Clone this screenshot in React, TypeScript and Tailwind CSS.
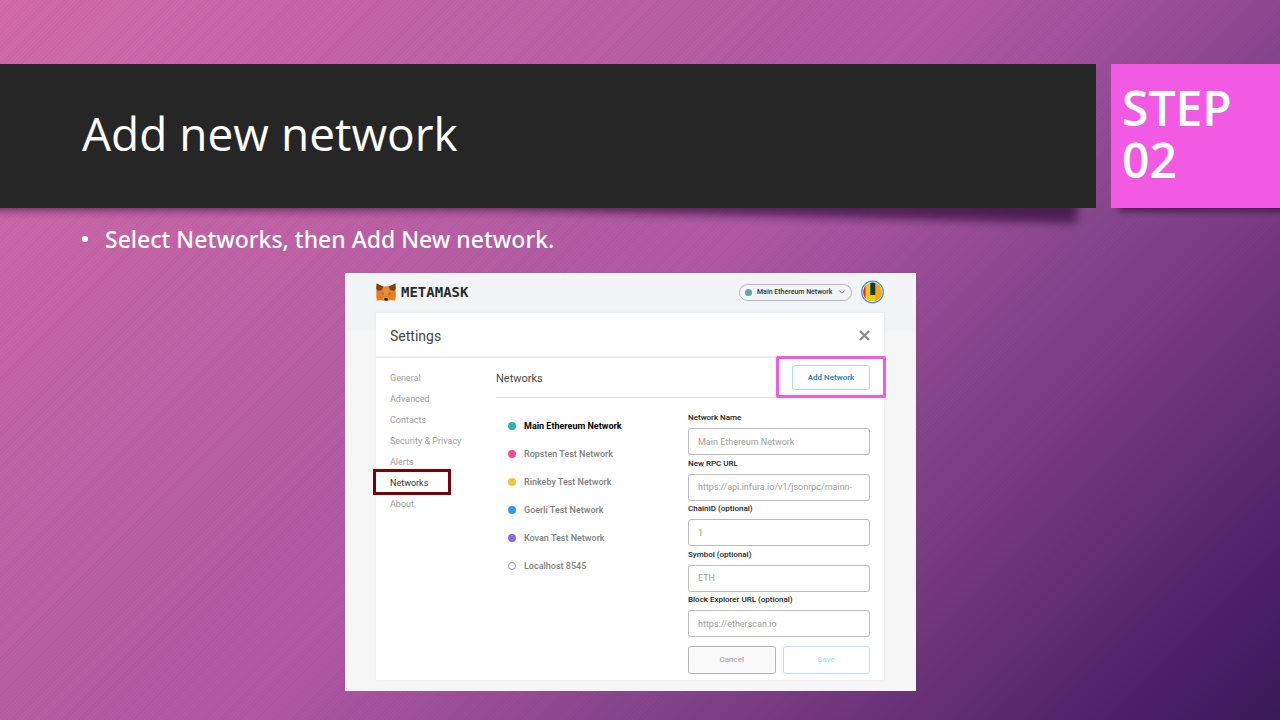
import { ChevronDown } from "lucide-react";

const settingsTabs = ["General", "Advanced", "Contacts", "Security & Privacy", "Alerts", "Networks", "About"];

const networks = [
  { name: "Main Ethereum Network", dot: "bg-[#29b6af]", active: true },
  { name: "Ropsten Test Network", dot: "bg-[#ff4a8d]" },
  { name: "Rinkeby Test Network", dot: "bg-[#ebc53b]" },
  { name: "Goerli Test Network", dot: "bg-[#3099f2]" },
  { name: "Kovan Test Network", dot: "bg-[#8b64f0]" },
  { name: "Localhost 8545", dot: "border border-[#9a9a9a] bg-white" },
];

const fields = [
  { id: "network-name", label: "Network Name", placeholder: "Main Ethereum Network" },
  { id: "rpc-url", label: "New RPC URL", placeholder: "https://api.infura.io/v1/jsonrpc/mainn-" },
  { id: "chain-id", label: "ChainID (optional)", placeholder: "1" },
  { id: "symbol", label: "Symbol (optional)", placeholder: "ETH" },
  { id: "explorer", label: "Block Explorer URL (optional)", placeholder: "https://etherscan.io" },
];

function FoxLogo() {
  return (
    <svg viewBox="0 0 20 18" className="h-[18px] w-5" aria-hidden="true">
      <path d="M0.600 0.500 7 3.500h6l6.400-3 0.300 6v7l-0.500 4-4.500-0.400-2.700 0.700H8L5.300 17.100l-4.500 0.400L0.300 13.500v-7z" fill="#e67e22" />
      <path d="M0.600 0.500 7.500 3.700 5.500 7 2 8 0.300 5.500z" fill="#7d421b" />
      <path d="M19.400 0.500 12.500 3.700l2 3.300L18 8l1.700-2.500z" fill="#7d421b" />
      <path d="M7.500 3.700h5l1 5.300-1.500 4H8L6.500 9z" fill="#ef8b2c" />
      <path d="M5.700 10 8 10.600 7.600 11.600 6 11.300zM14.300 10 12 10.600 12.400 11.600 14 11.300z" fill="#6d6a5f" />
      <path d="M6.800 14.900 8.600 14.400h2.800l1.800 0.500-1.800 2.800H8.600z" fill="#c9a98c" />
      <path d="M8.600 14.900h2.800l0.500 1.700-0.800 0.900H8.900l-0.800-0.900z" fill="#1d1d1d" />
    </svg>
  );
}

function Avatar() {
  return (
    <svg viewBox="0 0 24 24" className="size-6" role="img" aria-label="Account">
      <defs>
        <clipPath id="avatar-clip">
          <circle cx="12.500" cy="12" r="9.400" />
        </clipPath>
      </defs>
      <circle cx="12.500" cy="12" r="10.800" fill="#fff" stroke="#4390cf" strokeWidth="1.300" />
      <g clipPath="url(#avatar-clip)">
        <rect width="24" height="24" fill="#f5c70b" />
        <rect x="15.500" width="9" height="24" fill="#fba60c" />
        <rect width="5.500" height="24" fill="#e5283f" />
        <rect x="10.300" width="5" height="15" fill="#0b3a4c" />
      </g>
    </svg>
  );
}

function WalletSettings() {
  return (
    <section className="w-[571px] bg-[linear-gradient(#f2f4f6_58px,#f6f6f6_58px)] pr-8 pb-[11px] pl-[31px] font-['Roboto',sans-serif]">
      <header className="flex h-10 items-center justify-between pb-[2px]">
        <div className="flex items-center gap-[5px]">
          <FoxLogo />
          <span className="font-['DejaVu_Sans_Mono',monospace] text-sm leading-4 font-bold text-[#2a2a2a]">METAMASK</span>
        </div>
        <div className="flex items-center gap-2">
          <div className="relative flex items-center">
            <span className="absolute left-[6px] size-[7px] rounded-full bg-[#5fa8a2]" />
            <select
              aria-label="Network"
              className="h-[17px] w-[113px] appearance-none rounded-full border border-[#b3b5b8] bg-transparent pl-[17px] text-[7px] font-medium text-[#333]"
            >
              <option>Main Ethereum Network</option>
            </select>
            <ChevronDown className="pointer-events-none absolute right-[5px] size-[10px] text-[#555]" strokeWidth={2} />
          </div>
          <Avatar />
        </div>
      </header>

      <div className="bg-white shadow-[0_0_3px_rgba(0,0,0,0.06)]">
        <div className="flex h-[45px] items-center justify-between border-b-2 border-[#ececec] px-[14px] pt-[2px]">
          <h2 className="text-sm text-[#444]">Settings</h2>
          <button type="button" aria-label="Close">
            <svg viewBox="0 0 11 11" className="size-[11px]" aria-hidden="true">
              <path d="M1 1l9 9M10 1l-9 9" stroke="#8c8c8c" strokeWidth="2.400" fill="none" />
            </svg>
          </button>
        </div>

        <div className="flex pr-[14px] pb-[6px] pl-[14px]">
          <nav className="w-[106px] pt-[10px]">
            <ul className="text-[9px] leading-[21px] text-[#a0a0a0]">
              {settingsTabs.map((tab) => (
                <li key={tab} className="relative">
                  <a href={"#" + tab} className={tab === "Networks" ? "text-[#333]" : ""}>
                    {tab}
                  </a>
                  {tab === "Networks" && (
                    <span className="absolute -top-1 -left-[17px] h-[26px] w-[78px] border-3 border-[#790007]" />
                  )}
                </li>
              ))}
            </ul>
          </nav>

          <div className="flex-1">
            <div className="flex h-10 items-center justify-between border-b border-[#dedede]">
              <h3 className="pt-[3px] text-[11px] text-[#4a4a4a]">Networks</h3>
              <div className="relative">
                <button
                  type="button"
                  className="block h-[25px] w-[78px] rounded-[3px] border border-[#b5d6ef] text-[8px] font-semibold text-[#2f80c4]"
                >
                  Add Network
                </button>
                <span className="pointer-events-none absolute -top-[9px] -left-4 h-[42px] w-[110px] rounded-[2px] border-3 border-[#f35ae4]" />
              </div>
            </div>

            <div className="flex justify-between">
              <ul className="pt-[14px] pl-3 text-[9px] leading-7 font-medium text-[#7d7f82]">
                {networks.map((network) => (
                  <li key={network.name} className="flex items-center gap-2">
                    <span className={"size-2 rounded-full " + network.dot} />
                    <span className={network.active ? "font-bold text-black" : ""}>{network.name}</span>
                  </li>
                ))}
              </ul>

              <form className="w-[182px] pt-[13px]">
                <div className="flex h-[226px] flex-col justify-between">
                  {fields.map((field) => (
                    <div key={field.id} className="flex flex-col">
                      <label htmlFor={field.id} className="h-[17px] text-[8px] leading-[14px] font-medium text-[#222]">
                        {field.label}
                      </label>
                      <input
                        id={field.id}
                        type="text"
                        placeholder={field.placeholder}
                        className="h-[27px] rounded-[3px] border border-[#bcbcbc] px-[9px] text-[9px] placeholder:text-[#a0a0a0]"
                      />
                    </div>
                  ))}
                </div>
                <div className="mt-[9px] flex gap-[7px] text-[8px] font-medium">
                  <button type="button" className="h-7 flex-1 rounded-[3px] border border-[#b5b5b5] bg-[#fafafa] text-[#adadad]">
                    Cancel
                  </button>
                  <button type="submit" className="h-7 flex-1 rounded-[3px] border border-[#b9dcf5] text-[#b9dcf5]">
                    Save
                  </button>
                </div>
              </form>
            </div>
          </div>
        </div>
      </div>
    </section>
  );
}

export default function App() {
  return (
    <main className="min-h-screen bg-[repeating-linear-gradient(135deg,rgba(60,20,90,0.05)_0px,rgba(60,20,90,0.05)_1px,transparent_1px,transparent_3px),linear-gradient(135deg,#d36ca9_0%,#bc60a5_30%,#ae58a3_49%,#a2519c_56%,#88468d_66%,#75387e_76%,#4f2269_91%,#381859_100%)] pt-16 pb-7 font-['Open_Sans',sans-serif] text-white">
      <header className="relative isolate flex gap-[15px]">
        <svg
          className="absolute top-full left-0 -z-10 h-8 w-full overflow-visible"
          viewBox="0 0 1280 32"
          preserveAspectRatio="none"
          aria-hidden="true"
        >
          <defs>
            <filter id="soft" x="-5%" y="-100%" width="110%" height="300%">
              <feGaussianBlur stdDeviation="5" />
            </filter>
            <filter id="soft-step" x="-10%" y="-100%" width="120%" height="300%">
              <feGaussianBlur stdDeviation="3" />
            </filter>
          </defs>
          <path d="M-20-20H1077V15L500 2H-20z" fill="#1c0a24" fillOpacity="0.600" filter="url(#soft)" />
          <path d="M1119-20H1300V3H1119z" fill="#1c0a24" fillOpacity="0.700" filter="url(#soft-step)" />
        </svg>
        <div className="flex h-36 flex-1 items-center bg-[#262626] pb-[6px] pl-[82px]">
          <h1 className="text-[46px]">Add new network</h1>
        </div>
        <div className="flex h-36 w-[169px] items-center bg-[#f35ae4] pr-8 pb-1 pl-[11px]">
          <p className="text-5xl leading-[52px] font-semibold">STEP 02</p>
        </div>
      </header>

      <ul className="pt-[13px] pl-[82px] font-['Noto_Sans',sans-serif] text-[23px] leading-9 font-medium">
        <li className="flex items-center gap-[17px]">
          <span className="size-[6px] rounded-full bg-white" />
          Select Networks, then Add New network.
        </li>
      </ul>

      <div className="flex justify-center pt-4 pr-[19px]">
        <WalletSettings />
      </div>
    </main>
  );
}
